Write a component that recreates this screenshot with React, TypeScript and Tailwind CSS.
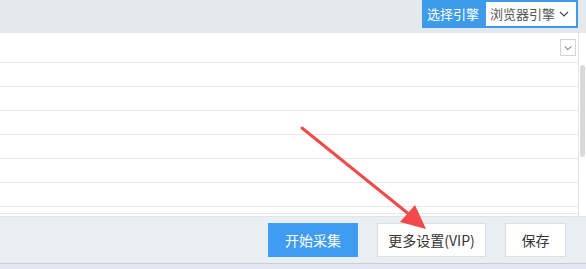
import React from 'react';

const font = { fontFamily: '"Noto Sans CJK SC", "Noto Sans", sans-serif' };

const Chevron: React.FC<{ size?: number }> = ({ size = 12 }) => (
  <svg width={size} height={size} viewBox="0 0 12 12" fill="none">
    <path d="M2 4l4 4 4-4" stroke="#444" strokeWidth="1.1" />
  </svg>
);

const App: React.FC = () => {
  const rows = [30, 24, 24, 24, 24, 24, 24];

  return (
    <div className="relative w-[586px] h-[269px] overflow-hidden bg-white flex flex-col" style={font}>
      {/* top bar */}
      <div className="h-[33px] shrink-0 bg-[#e4e8ef] flex justify-end pr-[8px]">
        <div className="h-[28px] bg-[#3d9be9] flex items-center pl-[5px] pr-[2px]">
          <span className="text-white text-[13px] w-[59px]">选择引擎</span>
          <div className="h-[24px] w-[90px] bg-white flex items-center justify-between pl-[4px] pr-[6px]">
            <span className="text-[13px] text-[#555]">浏览器引擎</span>
            <Chevron />
          </div>
        </div>
      </div>

      {/* table */}
      <div className="flex h-[183px] shrink-0">
        <div className="flex-1 flex flex-col">
          {rows.map((h, i) => (
            <div
              key={i}
              className="border-b border-[#e6e8ec] flex items-center justify-end pr-[2px]"
              style={{ height: h }}
            >
              {i === 0 && (
                <div className="w-[16px] h-[17px] border border-[#d4d4d4] bg-white flex items-center justify-center">
                  <Chevron size={10} />
                </div>
              )}
            </div>
          ))}
          <div className="h-[7px] border-b border-[#e6e8ec]" />
        </div>
        <div className="w-[8px] border-l border-[#e2e4e8] bg-white pt-[32px] pl-[1px]">
          <div className="w-[5px] h-[92px] rounded-full bg-[#d9d9d9]" />
        </div>
      </div>

      {/* footer */}
      <div className="h-[47px] shrink-0 bg-[#e9eef3] border-t border-[#dfe4ea] flex items-start gap-[19px] pt-[6px] pl-[268px]">
        <button className="w-[90px] h-[34px] bg-[#3f9cf0] text-white text-[14px]">开始采集</button>
        <button className="w-[109px] h-[34px] bg-white border border-[#dcdfe4] text-[#333] text-[14px]">更多设置(VIP)</button>
        <button className="w-[61px] h-[34px] bg-white border border-[#dcdfe4] text-[#333] text-[14px]">保存</button>
      </div>
      <div className="flex-1 bg-[#e0e6f2] border-t border-[#c9ced6]" />

      {/* annotation arrow */}
      <svg className="absolute left-0 top-0 pointer-events-none" width="586" height="269">
        <line x1="302" y1="128" x2="410" y2="215" stroke="#f14a4a" strokeWidth="3" strokeLinecap="round" />
        <polygon points="426,229 400,222 415,205" fill="#f14a4a" />
      </svg>
    </div>
  );
};

export default App;
